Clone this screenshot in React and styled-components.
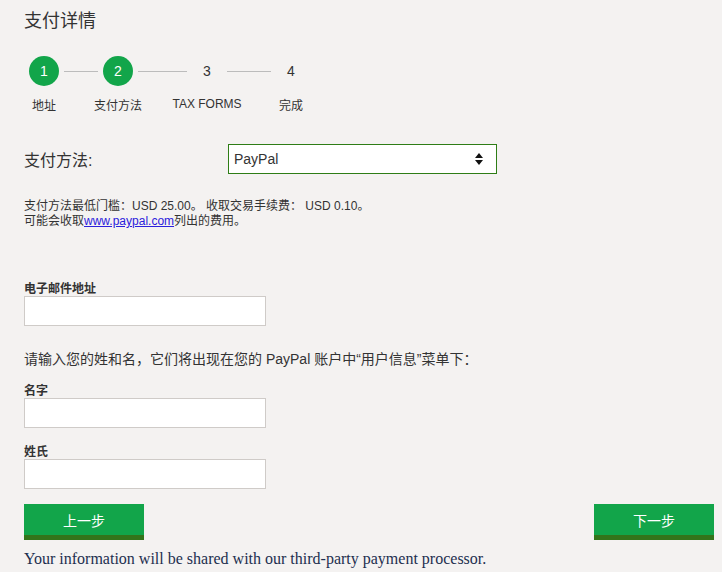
import React from 'react';
import styled, { createGlobalStyle } from 'styled-components';

const GlobalStyle = createGlobalStyle`
  html, body {
    margin: 0;
    padding: 0;
    background: #f4f2f1;
  }
  body {
    font-family: "Liberation Sans", Arial, "Noto Sans CJK SC", sans-serif;
    color: #333;
  }
`;

const Page = styled.div`
  width: 690px;
  padding: 9px 8px 0 24px;
`;

const Title = styled.h1`
  margin: 0;
  font-size: 18px;
  font-weight: normal;
  line-height: 24px;
  color: #333;
`;

const Stepper = styled.div`
  display: flex;
  margin-top: 23px;
  padding-left: 5px;
`;

const Step = styled.div`
  width: 30px;
  display: flex;
  flex-direction: column;
  align-items: center;
`;

const Circle = styled.div`
  width: 30px;
  height: 30px;
  border-radius: 50%;
  display: flex;
  align-items: center;
  justify-content: center;
  font-size: 14px;
  background: ${(p) => (p.$done ? '#12a54a' : 'transparent')};
  color: ${(p) => (p.$done ? '#fff' : '#333')};
`;

const StepLabel = styled.div`
  margin-top: ${(p) => (p.$raised ? '11px' : '13px')};
  font-size: 12px;
  line-height: 14px;
  white-space: nowrap;
  color: #333;
`;

const Connector = styled.div`
  width: ${(p) => p.$w}px;
  height: 1px;
  margin: 15px 5px 0;
  background: #bcbcbc;
`;

const MethodRow = styled.div`
  display: flex;
  align-items: center;
  margin-top: 31px;
`;

const MethodLabel = styled.div`
  width: 204px;
  font-size: 16px;
  line-height: 20px;
  padding-top: 4px;
`;

const Select = styled.div`
  box-sizing: border-box;
  width: 269px;
  height: 30px;
  border: 1px solid #2e7d16;
  background: #fff;
  display: flex;
  align-items: center;
  justify-content: space-between;
  padding: 0 13px 0 5px;
  font-size: 14px;
  color: #333;
`;

const Info = styled.p`
  margin: 25px 0 0;
  font-size: 12px;
  line-height: 15px;
`;

const Link = styled.a`
  color: #2b20dc;
  text-decoration: underline;
`;

const FieldLabel = styled.label`
  display: block;
  margin-top: ${(p) => p.$mt}px;
  font-size: 12px;
  font-weight: bold;
  line-height: 14px;
  color: #333;
`;

const Input = styled.input`
  display: block;
  width: 242px;
  height: 30px;
  box-sizing: border-box;
  margin: 0;
  border: 1px solid #cfcbc8;
  background: #fff;
  outline: none;
`;

const Instruction = styled.p`
  margin: 23px 0 0;
  font-size: 14px;
  line-height: 20px;
  color: #333;
`;

const Buttons = styled.div`
  display: flex;
  justify-content: space-between;
  margin-top: 15px;
`;

const Button = styled.button`
  width: 120px;
  height: 36px;
  box-sizing: border-box;
  border: none;
  border-bottom: 5px solid #33741a;
  background: #12a54a;
  color: #fff;
  font-family: inherit;
  font-size: 14px;
  padding: 0;
  cursor: pointer;
`;

const Note = styled.p`
  margin: 10px 0 0;
  font-family: "Liberation Serif", "Times New Roman", serif;
  font-size: 16px;
  line-height: 18px;
  color: #1d2f4f;
`;

const steps = [
  { n: 1, label: '地址', done: true },
  { n: 2, label: '支付方法', done: true },
  { n: 3, label: 'TAX FORMS', done: false, raised: true },
  { n: 4, label: '完成', done: false },
];
const connectors = [34, 49, 44];

function SortArrows() {
  return (
    <svg width="8" height="12" viewBox="0 0 8 12">
      <path d="M4 0 L8 5 H0 Z M0 7 H8 L4 12 Z" fill="#111" />
    </svg>
  );
}

export default function App() {
  return (
    <>
      <GlobalStyle />
      <Page>
        <Title>支付详情</Title>
        <Stepper>
          {steps.map((s, i) => (
            <React.Fragment key={s.n}>
              <Step>
                <Circle $done={s.done}>{s.n}</Circle>
                <StepLabel $raised={s.raised}>{s.label}</StepLabel>
              </Step>
              {i < connectors.length && <Connector $w={connectors[i]} />}
            </React.Fragment>
          ))}
        </Stepper>

        <MethodRow>
          <MethodLabel>支付方法:</MethodLabel>
          <Select>
            <span>PayPal</span>
            <SortArrows />
          </Select>
        </MethodRow>

        <Info>
          支付方法最低门槛：USD 25.00。 收取交易手续费： USD 0.10。
          <br />
          可能会收取<Link href="#">www.paypal.com</Link>列出的费用。
        </Info>

        <FieldLabel $mt={53}>电子邮件地址</FieldLabel>
        <Input type="text" />

        <Instruction>请输入您的姓和名，它们将出现在您的 PayPal 账户中“用户信息”菜单下：</Instruction>

        <FieldLabel $mt={15}>名字</FieldLabel>
        <Input type="text" />

        <FieldLabel $mt={17}>姓氏</FieldLabel>
        <Input type="text" />

        <Buttons>
          <Button>上一步</Button>
          <Button>下一步</Button>
        </Buttons>

        <Note>Your information will be shared with our third-party payment processor.</Note>
      </Page>
    </>
  );
}
